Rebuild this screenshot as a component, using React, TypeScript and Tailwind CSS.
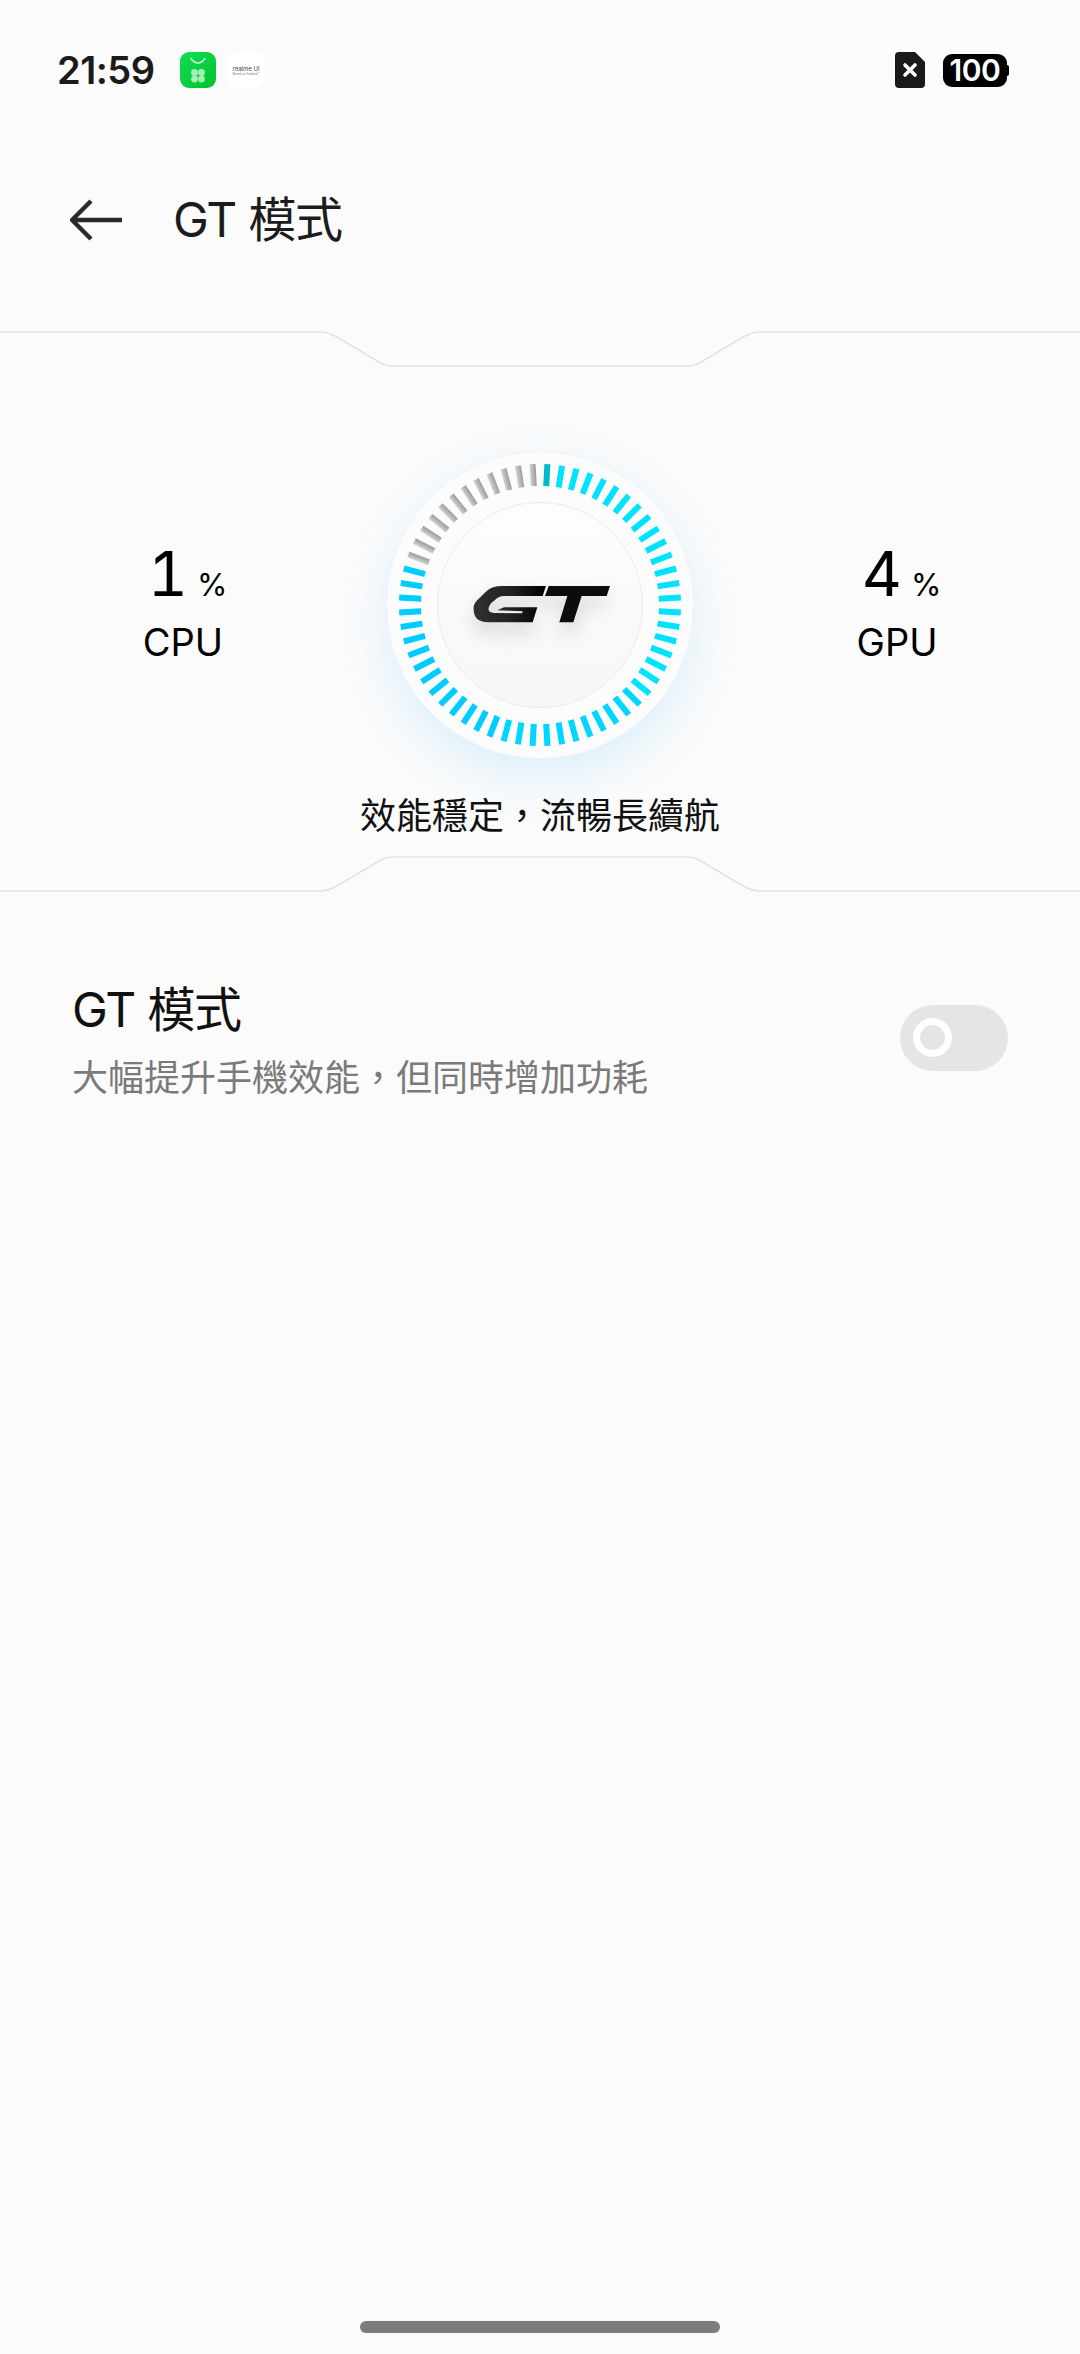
const TICKS = Array.from({ length: 60 }, (_, i) => 3 + i * 6);

// colour of one dial tick, angle in degrees from twelve o'clock
function tickColor(deg: number) {
  if (deg === 3) return '#00b9cc';
  if (deg > 288) return 'url(#tickGray)';
  if (deg < 130) return '#00e3ff';
  if (deg < 200) return '#00d6ff';
  return '#00ccff';
}

function Dial() {
  return (
    <div className="relative w-[308px] h-[308px] rounded-full bg-[#fcfcfd] border border-[#edf4f8] shadow-[0_18px_50px_rgba(0,165,255,0.13)] flex items-center justify-center">
      <svg className="absolute inset-0" width="306" height="306" viewBox="-153 -153 306 306">
        <defs>
          <linearGradient id="tickGray" x1="0" y1="0" x2="1" y2="0">
            <stop offset="0" stopColor="#d2d2d2" />
            <stop offset="1" stopColor="#9c9c9c" />
          </linearGradient>
        </defs>
        {TICKS.map((deg) => (
          <rect
            key={deg}
            x="-3"
            y="-141"
            width="6"
            height="22"
            fill={tickColor(deg)}
            transform={`rotate(${deg})`}
          />
        ))}
      </svg>
      <div className="w-[206px] h-[206px] rounded-full bg-gradient-to-b from-[#fdfdfd] to-[#f7f7f7] border border-[#ececec] flex items-center justify-center">
        <svg
          className="drop-shadow-[0_10px_9px_rgba(0,0,0,0.14)]"
          width="160"
          height="70"
          viewBox="0 0 480 210"
        >
          <defs>
            <linearGradient id="gt" x1="0" y1="0" x2="1" y2="0">
              <stop offset="0" stopColor="#303030" />
              <stop offset="0.5" stopColor="#222222" />
              <stop offset="1" stopColor="#000000" />
            </linearGradient>
          </defs>
          <path
            fill="url(#gt)"
            d="M258 48 L125 48 Q97 48 80 63 L50 92 Q36 106 43 133 Q50 157 85 157 L218 157 L232 112 L132 112 L112 121 L188 124 L186 130 L102 129 Q82 127 86 113 Q90 100 105 90 Q116 78 132 78 L248 78 Z"
          />
          <path
            fill="#0c0c0c"
            d="M266 48 L450 48 L440 78 L365 78 L340 157 L298 157 L322 78 L255 78 Z"
          />
        </svg>
      </div>
    </div>
  );
}

function Stat({ value, label }: { value: string; label: string }) {
  return (
    <div className="flex flex-col items-center mb-[9px]">
      <div className="flex items-baseline text-black pl-[9px] tabular-nums">
        <span className="text-[62px] leading-[72px]">{value}</span>
        <span className="text-[31px] leading-[40px] ml-[9px]">%</span>
      </div>
      <div className="text-[38px] leading-[44px] text-black mt-[10px]">{label}</div>
    </div>
  );
}

function Divider({ flip }: { flip?: boolean }) {
  const d = flip
    ? 'M0 36 H320 Q328 36 336 31.5 L379 6 Q386 2 394 2 H686 Q694 2 701 6 L744 31.5 Q752 36 760 36 H1080'
    : 'M0 2 H320 Q328 2 336 6.5 L379 32 Q386 36 394 36 H686 Q694 36 701 32 L744 6.5 Q752 2 760 2 H1080';
  return (
    <svg className="block" width="1080" height="38" viewBox="0 0 1080 38" fill="none">
      <path d={d} stroke="#e2e3e7" strokeWidth="1.6" />
    </svg>
  );
}

export default function App() {
  return (
    <div
      lang="zh-TW"
      className="w-[1080px] h-[2354px] bg-[#fbfbfb] flex flex-col [font-family:Inter,'Noto_Sans_CJK_TC',sans-serif] overflow-hidden"
    >
      {/* status bar */}
      <div className="h-[140px] flex items-center justify-between pl-[57px] pr-[73px]">
        <div className="flex items-center">
          <span className="text-[38px] font-semibold text-[#1a1a1a] w-[123px] tracking-[-0.5px]">21:59</span>
          <svg width="36" height="36" viewBox="0 0 36 36">
            <defs>
              <linearGradient id="store" x1="0" y1="0" x2="1" y2="1">
                <stop offset="0" stopColor="#12de55" />
                <stop offset="1" stopColor="#00c22c" />
              </linearGradient>
            </defs>
            <rect width="36" height="36" rx="9" fill="url(#store)" />
            <path d="M10.5 6 Q18 16 25.5 6" stroke="#d6f7df" strokeWidth="1.4" fill="none" />
            <circle cx="14.5" cy="20.5" r="3.4" fill="#a6efb8" />
            <circle cx="21.5" cy="20.5" r="3.4" fill="#a6efb8" />
            <circle cx="14.5" cy="27" r="3.4" fill="#a6efb8" />
            <circle cx="21.5" cy="27" r="3.4" fill="#a6efb8" />
          </svg>
          <div className="ml-[12px] w-[36px] h-[36px] rounded-[9px] bg-white flex flex-col items-center justify-center">
            <span className="text-[6px] leading-[7px] text-[#444444]">realme UI</span>
            <span className="text-[3px] leading-[4px] text-[#777777]">Based on Android™</span>
          </div>
        </div>
        <div className="flex items-center">
          <svg width="30" height="36" viewBox="0 0 30 36">
            <path
              d="M4 0 H20 L30 10 V32 Q30 36 26 36 H4 Q0 36 0 32 V4 Q0 0 4 0 Z"
              fill="#1a1a1a"
            />
            <path d="M10 13 L20 23 M20 13 L10 23" stroke="#ffffff" strokeWidth="3.6" strokeLinecap="round" />
          </svg>
          <div className="relative ml-[18px] w-[64px] h-[33px] rounded-[9px] bg-black flex items-center justify-center">
            <span className="text-[30px] leading-[33px] font-semibold text-white tracking-[-0.5px]">100</span>
            <span className="absolute right-[-2px] top-[11px] w-[3px] h-[11px] rounded-r-[2px] bg-black" />
          </div>
        </div>
      </div>

      {/* title */}
      <div className="h-[160px] flex items-center pl-[70px]">
        <svg width="52" height="42" viewBox="0 0 52 42" fill="none">
          <path
            d="M52 21 H3 M21 2 L2 21 L21 40"
            stroke="#2a2a2a"
            strokeWidth="4.4"
          />
        </svg>
        <span className="ml-[51px] text-[48px] leading-[60px] text-[#1c1c1c] tracking-[-1.2px]">GT 模式</span>
      </div>

      <div className="mt-[30px]">
        <Divider />
      </div>

      <div className="mt-[83px] grid grid-cols-[366px_348px_366px] items-center">
        <Stat value="1" label="CPU" />
        <div className="flex justify-center">
          <Dial />
        </div>
        <Stat value="4" label="GPU" />
      </div>

      <div className="mt-[32px] text-center text-[36px] leading-[50px] text-[#111111]">
        效能穩定，流暢長續航
      </div>

      <div className="mt-[14px]">
        <Divider flip />
      </div>

      {/* setting row */}
      <div className="mt-[87px] flex items-center justify-between pl-[72px] pr-[72px]">
        <div className="flex flex-col">
          <span className="text-[48px] leading-[60px] text-[#111111] tracking-[-1.2px]">GT 模式</span>
          <span className="mt-[13px] text-[36px] leading-[50px] text-[#7a7a7a]">大幅提升手機效能，但同時增加功耗</span>
        </div>
        <div className="mb-[8px] w-[108px] h-[66px] rounded-full bg-[#e5e5e5] flex items-center pl-[13px]">
          <div className="w-[39px] h-[39px] rounded-full border-[7px] border-white" />
        </div>
      </div>

      {/* gesture bar */}
      <div className="mt-auto mb-[21px] mx-auto w-[360px] h-[12px] rounded-full bg-[#7c7c7c]" />
    </div>
  );
}
